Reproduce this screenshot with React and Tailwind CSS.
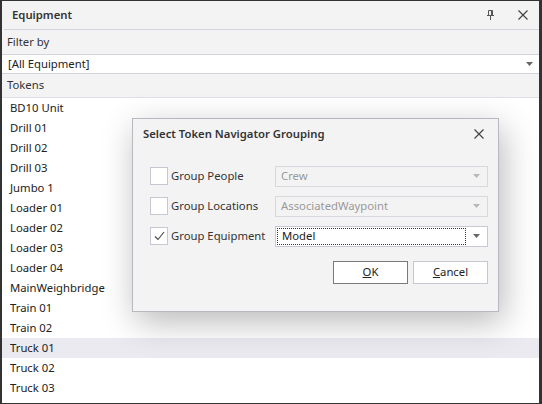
import React from 'react';

const tokens = [
  'BD10 Unit', 'Drill 01', 'Drill 02', 'Drill 03', 'Jumbo 1', 'Loader 01', 'Loader 02',
  'Loader 03', 'Loader 04', 'MainWeighbridge', 'Train 01', 'Train 02', 'Truck 01', 'Truck 02', 'Truck 03',
];

function Caret({ className = '' }) {
  return (
    <svg width="7" height="4" viewBox="0 0 7 4" className={className}>
      <path d="M0 0h7L3.5 4z" fill="currentColor" />
    </svg>
  );
}

function Cross({ size = 10 }) {
  return (
    <svg width={size} height={size} viewBox="0 0 10 10">
      <path d="M0.5 0.5l9 9M9.5 0.5l-9 9" stroke="#444" strokeWidth="1.2" />
    </svg>
  );
}

function Pin() {
  return (
    <svg width="7" height="10" viewBox="0 0 7 10">
      <path d="M1.5 0.5h4v5h-4z M0 5.5h7 M3.5 6v4" stroke="#555" strokeWidth="1" fill="none" />
      <path d="M4.5 1v4.5" stroke="#555" strokeWidth="1" />
    </svg>
  );
}

function Row({ checked, label, value, disabled }) {
  return (
    <div className="flex items-center h-[20px]">
      <div className="w-[125px] flex items-center">
        <div className="w-[18px] h-[18px] border border-[#c8c8d4] bg-white flex items-center justify-center text-[#333]">
          {checked && (
            <svg width="11" height="10" viewBox="0 0 11 10">
              <path d="M1 5.5l3 3L10 1" stroke="#444" strokeWidth="1.1" fill="none" />
            </svg>
          )}
        </div>
        <span className="ml-[3px] text-[#333]">{label}</span>
      </div>
      <div
        className={`flex-1 h-[21px] border flex items-center ${
          disabled ? 'border-[#d8d8de] bg-[#f3f3f3] text-[#9a9a9a]' : 'border-[#c8c8d4] bg-white text-[#222]'
        }`}
      >
        {disabled ? (
          <span className="pl-[5px] flex-1">{value}</span>
        ) : (
          <span className="ml-[1px] h-[17px] flex-1 border border-dotted border-[#333] pl-[4px] flex items-center">{value}</span>
        )}
        <Caret className={`mx-[7px] ${disabled ? 'text-[#b8b8b8]' : 'text-[#666]'}`} />
      </div>
    </div>
  );
}

export default function App() {
  return (
    <div
      className="relative w-[542px] h-[404px] bg-[#f3f3f3] border border-[#333] border-l-2 border-r-[3px] flex flex-col text-[11.3px] overflow-hidden"
      style={{ fontFamily: '"Segoe UI", "Noto Sans", "Open Sans", sans-serif' }}
    >
      <div className="h-[29px] flex items-center pl-[8px] pr-[11px] border-b border-[#d4d4dc] ml-[2px]">
        <span className="font-semibold text-[#333] flex-1">Equipment</span>
        <Pin />
        <span className="ml-[24px]"><Cross /></span>
      </div>
      <div className="h-[24px] flex items-center pl-[5px] text-[#333]">Filter by</div>
      <div className="h-[20px] bg-white border-y border-[#d4d4dc] flex items-center pl-[6px] pr-[6px] text-[#222]">
        <span className="flex-1">[All Equipment]</span>
        <Caret className="text-[#666]" />
      </div>
      <div className="h-[23px] flex items-center pl-[5px] text-[#333]">Tokens</div>
      <div className="flex-1 bg-white border-t border-[#e0e0e6]">
        {tokens.map((t) => (
          <div
            key={t}
            className={`h-[20px] flex items-center pl-[8px] text-[#222] ${t === 'Truck 01' ? 'bg-[#eaeaf0]' : ''}`}
          >
            {t}
          </div>
        ))}
      </div>

      <div className="absolute left-[130px] top-[117px] w-[367px] h-[194px] bg-[#f3f3f3] border border-[#b8b8be] shadow-[4px_10px_32px_rgba(0,0,0,0.28)] flex flex-col">
        <div className="h-[30px] flex items-center pl-[10px] pr-[14px]">
          <span className="flex-1 font-semibold text-[#333]">Select Token Navigator Grouping</span>
          <Cross />
        </div>
        <div className="flex flex-col gap-[10px] pl-[17px] pr-[10px] mt-[17px]">
          <Row label="Group People" value="Crew" disabled />
          <Row label="Group Locations" value="AssociatedWaypoint" disabled />
          <Row checked label="Group Equipment" value="Model" />
        </div>
        <div className="flex justify-end gap-[5px] pr-[10px] mt-[15px]">
          <button className="w-[75px] h-[23px] bg-white border border-[#7a7a7a] text-[#222]">
            <span className="underline">O</span>K
          </button>
          <button className="w-[75px] h-[23px] bg-white border border-[#c8c8d4] text-[#222]">
            <span className="underline">C</span>ancel
          </button>
        </div>
      </div>
    </div>
  );
}
